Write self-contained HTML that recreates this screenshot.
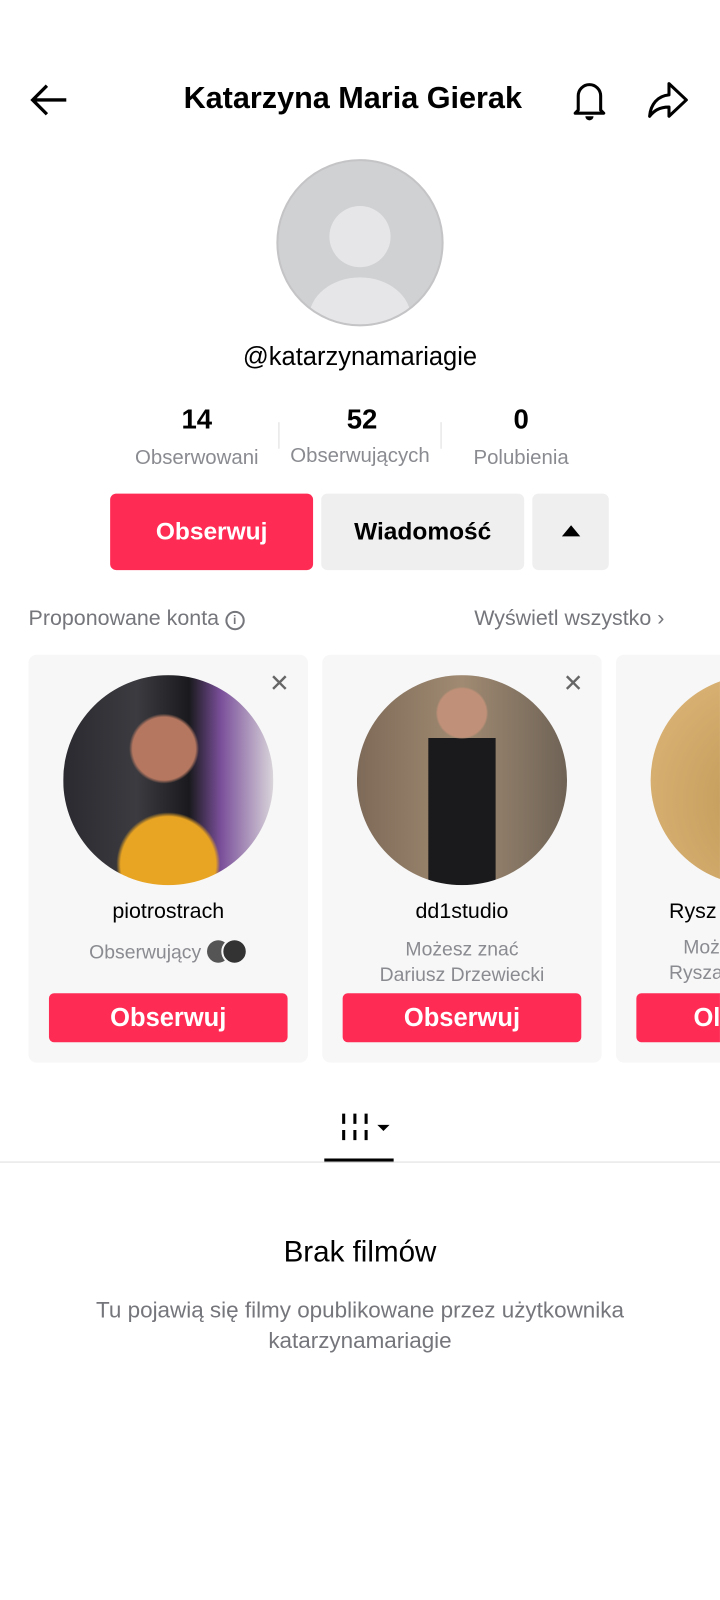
<!DOCTYPE html>
<html style="overflow:hidden;width:720px"><head><meta charset="utf-8"><style>
*{margin:0;padding:0;box-sizing:border-box}
body{width:720px;height:1600px;background:#fff;font-family:"Liberation Sans",sans-serif;position:relative;overflow:hidden;color:#161823}
#w{position:absolute;left:0;top:0;width:706px;height:1569px;transform:scale(1.0198);transform-origin:0 0;overflow:hidden}
.a{position:absolute}
.c{text-align:center}
.card{position:absolute;top:642px;width:274px;height:400px;background:#f7f7f7;border-radius:8px;overflow:hidden}
.av{position:absolute;left:34px;top:20px;width:206px;height:206px;border-radius:50%;overflow:hidden}
.nm{position:absolute;top:240px;width:274px;text-align:center;font-size:21px;color:#000}
.sub{position:absolute;width:274px;text-align:center;font-size:19px;color:#8a8b91;line-height:25px}
.btn{position:absolute;left:20px;top:332px;width:234px;height:48px;background:#fe2c55;border-radius:5px;color:#fff;font-size:25px;font-weight:bold;text-align:center;line-height:48px}
.x{position:absolute;right:18px;top:14px;font-size:24px;color:#666}
</style></head><body><div id="w">
<svg class="a" style="left:28px;top:80px" width="40" height="36" viewBox="0 0 40 36"><path d="M37 18H4M18 4L4 18l14 14" fill="none" stroke="#000" stroke-width="3.2"/></svg>
<div class="a" style="left:180px;top:80px;font-size:30px;font-weight:bold;color:#000">Katarzyna Maria Gierak</div>
<svg class="a" style="left:560px;top:78px" width="36" height="42" viewBox="0 0 36 42"><path d="M7 30V16a11 11 0 0122 0v14l3 3H4z" fill="none" stroke="#000" stroke-width="3" stroke-linejoin="round"/><path d="M14 36h8a4 4 0 01-8 0z" fill="#000"/></svg>
<svg class="a" style="left:634px;top:78px" width="42" height="40" viewBox="0 0 42 40"><path d="M22 4l17 16-17 16v-9C12 27 7 31 3 36c1-12 8-20 19-21z" fill="none" stroke="#000" stroke-width="3" stroke-linejoin="round"/></svg>
<div class="a" style="left:271px;top:156px;width:164px;height:164px;border-radius:50%;background:#d0d1d3;border:2px solid #c4c4c6;overflow:hidden">
<div class="a" style="left:50px;top:44px;width:60px;height:60px;border-radius:50%;background:#e6e6e8"></div>
<div class="a" style="left:30px;top:114px;width:100px;height:80px;border-radius:50%;background:#e6e6e8"></div></div>
<div class="a c" style="left:0;width:706px;top:336px;font-size:25px;color:#000">@katarzynamariagie</div>
<div class="a c" style="left:118px;width:150px;top:396px;font-size:27px;font-weight:bold;color:#000">14</div>
<div class="a c" style="left:118px;width:150px;top:438px;font-size:20px;color:#8a8b91">Obserwowani</div>
<div class="a" style="left:273px;top:414px;width:1px;height:26px;background:#ddd"></div>
<div class="a c" style="left:275px;width:160px;top:396px;font-size:27px;font-weight:bold;color:#000">52</div>
<div class="a c" style="left:270px;width:166px;top:436px;font-size:20px;color:#8a8b91">Obserwujących</div>
<div class="a" style="left:432px;top:414px;width:1px;height:26px;background:#ddd"></div>
<div class="a c" style="left:436px;width:150px;top:396px;font-size:27px;font-weight:bold;color:#000">0</div>
<div class="a c" style="left:436px;width:150px;top:438px;font-size:20px;color:#8a8b91">Polubienia</div>
<div class="a c" style="left:108px;top:484px;width:199px;height:75px;background:#fe2c55;border-radius:6px;color:#fff;font-size:24px;font-weight:bold;line-height:75px">Obserwuj</div>
<div class="a c" style="left:315px;top:484px;width:199px;height:75px;background:#efefef;border-radius:6px;color:#000;font-size:24px;font-weight:bold;line-height:75px">Wiadomość</div>
<div class="a" style="left:522px;top:484px;width:75px;height:75px;background:#efefef;border-radius:6px"><div class="a" style="left:29px;top:31px;width:0;height:0;border-left:9px solid transparent;border-right:9px solid transparent;border-bottom:11px solid #000"></div></div>
<div class="a" style="left:28px;top:595px;font-size:21px;color:#75767c">Proponowane konta <span style="display:inline-block;width:19px;height:19px;border:2px solid #75767c;border-radius:50%;font-size:12px;text-align:center;line-height:15px;vertical-align:1px;font-weight:bold">i</span></div>
<div class="a" style="left:465px;top:595px;font-size:21px;color:#75767c">Wyświetl wszystko ›</div>
<div class="card" style="left:28px"><div class="x">✕</div>
<div class="av" style="background:radial-gradient(circle at 50% 90%,#e8a423 0 22%,transparent 24%),radial-gradient(circle at 48% 35%,#b57760 0 18%,transparent 20%),linear-gradient(90deg,#2a2a30 0,#3b3b40 35%,#1a1a1e 60%,#7a4f9a 75%,#d9d4da 100%)"></div>
<div class="nm">piotrostrach</div>
<div class="sub" style="top:278px">Obserwujący <span style="display:inline-block;width:22px;height:22px;border-radius:50%;background:#555;vertical-align:-4px"></span><span style="display:inline-block;width:26px;height:26px;border-radius:50%;background:#333;margin-left:-8px;vertical-align:-6px;border:2px solid #f7f7f7"></span></div>
<div class="btn">Obserwuj</div></div>
<div class="card" style="left:316px"><div class="x">✕</div>
<div class="av" style="background:radial-gradient(circle at 50% 18%,#c09078 0 12%,transparent 13%),linear-gradient(180deg,transparent 30%,#1a1a1c 30%,#1a1a1c 100%) 70px 0/66px 206px no-repeat,linear-gradient(90deg,#7e6a58,#a08a72 50%,#6f6356)"></div>
<div class="nm">dd1studio</div>
<div class="sub" style="top:277px">Możesz znać<br>Dariusz Drzewiecki</div>
<div class="btn">Obserwuj</div></div>
<div class="card" style="left:604px;width:102px;border-radius:8px 0 0 8px"><div class="av" style="background:radial-gradient(circle at 60% 60%,#222 0 30%,#c8a060 32%,#e0b87a)"></div>
<div class="a" style="left:52px;top:240px;font-size:21px;color:#000">Rysz</div>
<div class="a" style="left:66px;top:277px;font-size:19px;color:#8a8b91">Moż</div>
<div class="a" style="left:52px;top:302px;font-size:19px;color:#8a8b91">Rysza</div>
<div class="btn" style="text-align:left;padding-left:56px">Ol</div></div>
<svg class="a" style="left:334px;top:1090px" width="52" height="30" viewBox="0 0 52 30"><path d="M3 2v10M14 2v10M25 2v10M3 18v10M14 18v10M25 18v10" stroke="#000" stroke-width="3"/><path d="M36 13h12l-6 6z" fill="#000"/></svg>
<div class="a" style="left:318px;top:1136px;width:68px;height:4px;background:#000"></div>
<div class="a" style="left:0;top:1139px;width:706px;height:1px;background:#ddd"></div>
<div class="a c" style="left:0;width:706px;top:1212px;font-size:29px;color:#000">Brak filmów</div>
<div class="a c" style="left:0;width:706px;top:1270px;font-size:22px;color:#75767c;line-height:30px">Tu pojawią się filmy opublikowane przez użytkownika<br>katarzynamariagie</div>
</div></body></html>
